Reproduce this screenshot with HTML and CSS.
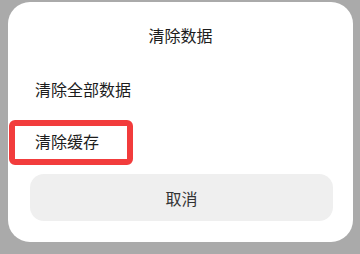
FILE: index.html
```html
<!DOCTYPE html>
<html lang="zh-CN">
<head>
<meta charset="utf-8">
<link rel="stylesheet" href="styles.css">
</head>
<body>
<div class="sheet">
  <div class="title">清除数据</div>
  <div class="item">清除全部数据</div>
  <div class="item item-marked">清除缓存<span class="mark"></span></div>
  <div class="cancel">取消</div>
</div>
</body>
</html>
```
FILE: styles.css
```css
html, body {
  margin: 0;
  padding: 0;
}
body {
  background: #aaaaaa;
  width: 360px;
  height: 254px;
  overflow: hidden;
  font-family: "Noto Sans CJK SC", "Noto Sans", sans-serif;
  color: #1c1c1c;
}
.sheet {
  margin: 2px 0 0 8px;
  width: 345px;
  height: 240px;
  background: #ffffff;
  border-radius: 22px;
  box-sizing: border-box;
  padding-top: 22px;
  display: flex;
  flex-direction: column;
}
.title {
  font-size: 16px;
  line-height: 22px;
  text-align: center;
  margin-bottom: 17px;
}
.item {
  height: 52px;
  display: flex;
  align-items: center;
  padding-left: 27px;
  font-size: 16px;
  line-height: 22px;
}
.item-marked {
  position: relative;
}
.mark {
  position: absolute;
  left: 1px;
  top: 5px;
  width: 124px;
  height: 45px;
  box-sizing: border-box;
  border: 6px solid #f23c3c;
  border-radius: 6px;
}
.cancel {
  margin: 7px 20px 0 22px;
  height: 47px;
  background: #efefef;
  border-radius: 14px;
  display: flex;
  align-items: center;
  justify-content: center;
  font-size: 16px;
  color: #333333;
}
```
